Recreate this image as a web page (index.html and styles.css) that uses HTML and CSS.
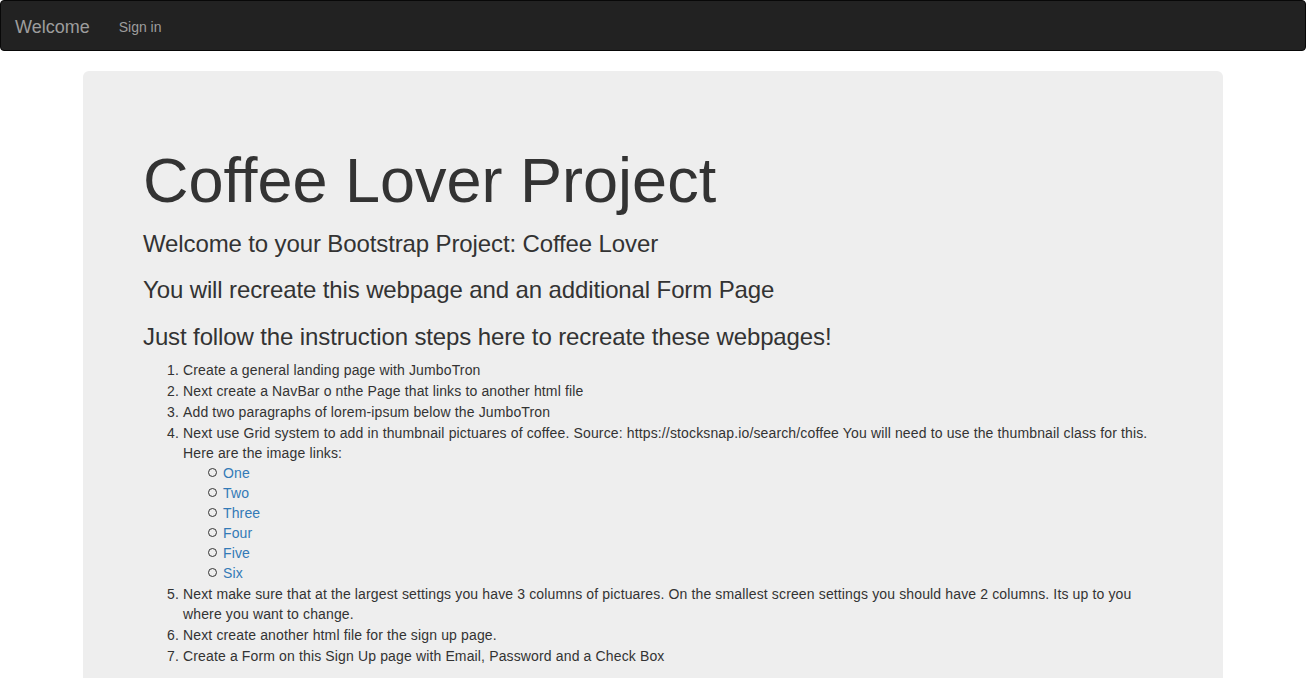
FILE: index.html
```html
<!DOCTYPE html>
<html>
<head>
<meta charset="utf-8">
<title>Coffee Lover Project</title>
<link rel="stylesheet" href="styles.css">
</head>
<body>
<nav class="navbar">
  <a class="brand" href="#">Welcome</a>
  <ul class="nav">
    <li><a href="#">Sign in</a></li>
  </ul>
</nav>
<div class="container">
  <div class="jumbotron">
    <h1>Coffee Lover Project</h1>
    <h3>Welcome to your Bootstrap Project: Coffee Lover</h3>
    <h3>You will recreate this webpage and an additional Form Page</h3>
    <h3>Just follow the instruction steps here to recreate these webpages!</h3>
    <ol class="steps">
      <li>Create a general landing page with JumboTron</li>
      <li>Next create a NavBar o nthe Page that links to another html file</li>
      <li>Add two paragraphs of lorem-ipsum below the JumboTron</li>
      <li>Next use Grid system to add in thumbnail pictuares of coffee. Source: https://stocksnap.io/search/coffee You will need to use the thumbnail class for this. Here are the image links:
        <ul class="links">
          <li><a href="#">One</a></li>
          <li><a href="#">Two</a></li>
          <li><a href="#">Three</a></li>
          <li><a href="#">Four</a></li>
          <li><a href="#">Five</a></li>
          <li><a href="#">Six</a></li>
        </ul>
      </li>
      <li>Next make sure that at the largest settings you have 3 columns of pictuares. On the smallest screen settings you should have 2 columns. Its up to you where you want to change.</li>
      <li>Next create another html file for the sign up page.</li>
      <li>Create a Form on this Sign Up page with Email, Password and a Check Box</li>
    </ol>
  </div>
</div>
</body>
</html>
```
FILE: styles.css
```css
* { box-sizing: border-box; }
html, body { margin: 0; padding: 0; }
body {
  font-family: "Liberation Sans", Arial, Helvetica, sans-serif;
  font-size: 14px;
  line-height: 1.42857143;
  color: #333;
  background: #fff;
}
a { color: #337ab7; text-decoration: none; }

.navbar {
  display: flex;
  align-items: stretch;
  height: 51px;
  background: #222;
  border: 1px solid #080808;
  border-radius: 4px;
  margin-bottom: 20px;
}
.brand {
  display: block;
  padding: 16px 14px 14px 14px;
  font-size: 18px;
  line-height: 20px;
  height: 50px;
  color: #9d9d9d;
}
.nav {
  display: flex;
  list-style: none;
  margin: 0;
  padding: 0;
}
.nav a {
  display: block;
  padding: 16px 15px 14px;
  line-height: 20px;
  color: #9d9d9d;
}

.container {
  width: 1170px;
  margin: 0 auto;
  padding: 0 15px;
}
.jumbotron {
  background: #eee;
  border-radius: 6px;
  padding: 48px 60px;
}
.jumbotron h1 {
  font-size: 63px;
  font-weight: 500;
  line-height: 62px;
  margin: 30px 0 10px;
}
.jumbotron h3 {
  font-size: 24px;
  font-weight: 500;
  line-height: 1.1;
  letter-spacing: -0.12px;
  margin: 20px 0 10px;
}
.steps {
  margin: 0 0 10px;
  padding-left: 40px;
  letter-spacing: 0.14px;
}
.steps > li + li { margin-top: 1px; }
.links {
  list-style: none;
  margin: 0;
  padding-left: 40px;
}
.links li::before {
  content: "";
  display: inline-block;
  width: 7px;
  height: 7px;
  border: 1px solid #333;
  border-radius: 50%;
  margin-left: -15px;
  margin-right: 6px;
  vertical-align: 1px;
}
```
